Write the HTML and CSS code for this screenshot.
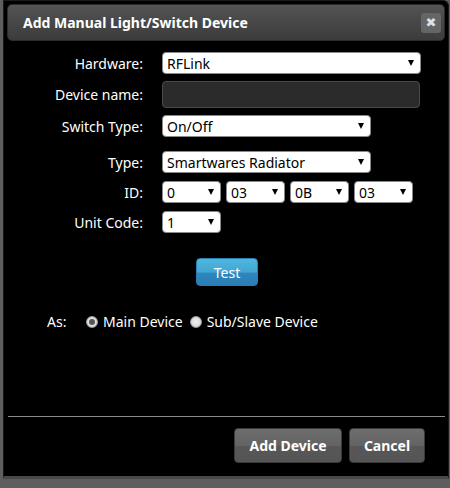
FILE: index.html
```html
<!DOCTYPE html>
<html>
<head>
<meta charset="utf-8">
<link rel="stylesheet" href="styles.css">
</head>
<body>
<div class="dialog">
  <div class="titlebar">
    <span class="title">Add Manual Light/Switch Device</span>
    <span class="close">&#x2716;</span>
  </div>
  <div class="form">
    <div class="row r-hw">
      <label class="lbl">Hardware:</label>
      <div class="select w-hw"><span>RFLink</span><i class="arrow"></i></div>
    </div>
    <div class="row r-name">
      <label class="lbl">Device name:</label>
      <div class="input"></div>
    </div>
    <div class="row r-sw">
      <label class="lbl">Switch Type:</label>
      <div class="select w-sw"><span>On/Off</span><i class="arrow"></i></div>
    </div>
    <div class="row r-type">
      <label class="lbl">Type:</label>
      <div class="select w-sw"><span>Smartwares Radiator</span><i class="arrow"></i></div>
    </div>
    <div class="row r-id">
      <label class="lbl">ID:</label>
      <div class="ids">
        <div class="select w-id"><span>0</span><i class="arrow"></i></div>
        <div class="select w-id"><span>03</span><i class="arrow"></i></div>
        <div class="select w-id"><span>0B</span><i class="arrow"></i></div>
        <div class="select w-id"><span>03</span><i class="arrow"></i></div>
      </div>
    </div>
    <div class="row r-unit">
      <label class="lbl">Unit Code:</label>
      <div class="select w-id"><span>1</span><i class="arrow"></i></div>
    </div>
  </div>
  <div class="test-wrap"><button class="btn-test">Test</button></div>
  <div class="as-row">
    <span class="as">As:</span>
    <span class="radio checked"></span><span class="rlabel">Main Device</span>
    <span class="radio"></span><span class="rlabel">Sub/Slave Device</span>
  </div>
  <div class="spacer"></div>
  <div class="footer">
    <button class="btn btn-add">Add Device</button>
    <button class="btn btn-cancel">Cancel</button>
  </div>
</div>
</body>
</html>
```

FILE: styles.css
```css
html, body {
  margin: 0;
  padding: 0;
}
body {
  width: 450px;
  height: 488px;
  background: #5e5e5e;
  font-family: "Noto Sans", "Open Sans", sans-serif;
  overflow: hidden;
}
.dialog {
  box-sizing: border-box;
  margin-left: 3px;
  width: 446px;
  height: 479px;
  background: #000;
  border: 1px solid #1a1a1a;
  border-bottom: 3px solid #4a4a4a;
  border-radius: 0 6px 0 0;
  display: flex;
  flex-direction: column;
  padding: 3px 3px 0 3px;
}
.titlebar {
  box-sizing: border-box;
  height: 37px;
  border-radius: 5px;
  background: linear-gradient(#545454, #474747 50%, #3c3c3c);
  border: 1px solid #2c2c2c;
  display: flex;
  align-items: center;
  padding: 0 0 0 15px;
  justify-content: space-between;
}
.title {
  color: #fff;
  font-weight: bold;
  font-size: 14px;
}
.close {
  width: 20px;
  height: 20px;
  margin-right: 3px;
  border-radius: 3px;
  background: #656565;
  color: #e0e0e0;
  font-size: 13px;
  font-family: "DejaVu Sans", sans-serif;
  display: flex;
  align-items: center;
  justify-content: center;
  line-height: 1;
}
.form {
  display: flex;
  flex-direction: column;
  padding-top: 11px;
}
.row {
  display: flex;
  align-items: center;
}
.lbl {
  width: 136px;
  text-align: right;
  color: #fff;
  font-size: 14px;
  margin-right: 19px;
}
.r-name { margin-top: 7px; }
.r-sw { margin-top: 7px; }
.r-type { margin-top: 14px; }
.r-id { margin-top: 8px; }
.r-unit { margin-top: 8px; }
.select {
  box-sizing: border-box;
  height: 22px;
  background: #fff;
  border: 1px solid #8a8a8a;
  border-radius: 4px;
  display: flex;
  align-items: center;
  justify-content: space-between;
  padding: 0 6px 0 4px;
  color: #000;
  font-size: 14px;
}
.arrow {
  width: 0;
  height: 0;
  border-left: 3.5px solid transparent;
  border-right: 3.5px solid transparent;
  border-top: 6px solid #000;
}
.w-hw { width: 259px; }
.w-sw { width: 209px; }
.w-id { width: 59px; }
.ids {
  display: flex;
  gap: 5px;
}
.input {
  box-sizing: border-box;
  width: 258px;
  height: 27px;
  background: #2b2b2b;
  border: 1px solid #4a4a4a;
  border-radius: 4px;
}
.test-wrap {
  display: flex;
  justify-content: center;
  padding-top: 25px;
}
.btn-test {
  width: 62px;
  height: 28px;
  border: 1px solid #2a7fb0;
  border-radius: 4px;
  background: linear-gradient(#4fb7de, #41a6d4 50%, #2d86bd 55%, #2a7eb5);
  color: #fff;
  font-family: inherit;
  font-size: 14px;
  padding: 0;
  margin-left: 2px;
}
.as-row {
  display: flex;
  align-items: center;
  padding-top: 26px;
  padding-left: 40px;
  color: #fff;
  font-size: 14px;
}
.as { width: 39px; }
.radio {
  box-sizing: border-box;
  width: 12px;
  height: 12px;
  border-radius: 50%;
  background: radial-gradient(#f2f2f2, #cfcfcf);
  border: 1px solid #9a9a9a;
  margin-right: 5px;
  position: relative;
}
.radio.checked::after {
  content: "";
  position: absolute;
  left: 2px;
  top: 2px;
  width: 6px;
  height: 6px;
  border-radius: 50%;
  background: #555;
}
.rlabel { margin-right: 7px; }
.spacer { flex: 1; }
.footer {
  border-top: 1px solid #8a8a8a;
  margin: 0 0 0 1px;
  display: flex;
  justify-content: flex-end;
  gap: 7px;
  padding: 11px 20px 13px 0;
}
.btn {
  height: 35px;
  border: 1px solid #3a3a3a;
  border-radius: 4px;
  background: linear-gradient(#6e6e6e, #636363 50%, #575757 52%, #555);
  color: #fff;
  font-family: inherit;
  font-weight: bold;
  font-size: 14px;
  padding: 0;
}
.btn-add { width: 108px; }
.btn-cancel { width: 76px; }
```
